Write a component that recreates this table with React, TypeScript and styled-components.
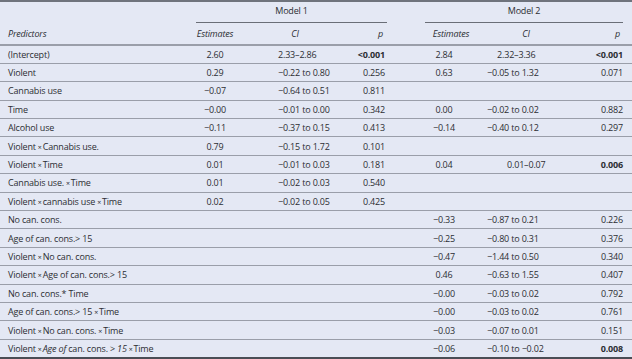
import React from 'react';
import styled, { createGlobalStyle } from 'styled-components';

const GlobalStyle = createGlobalStyle`
    html, body {
        margin: 0;
        padding: 0;
        background: #e4e8f4;
    }
    body {
        font-family: "Open Sans", "Noto Sans", sans-serif;
        color: #2c2e33;
    }
`;

const Table = styled.table`
    width: 632px;
    table-layout: fixed;
    border-collapse: collapse;
    font-size: 9px;
    letter-spacing: -0.18px;
    border-top: 2px solid #6f737c;
    border-bottom: 2px solid #4a4d55;
`;

const ModelHead = styled.th`
    height: 21px;
    padding: 0;
    font-weight: 400;
    vertical-align: bottom;
`;

const ModelLabel = styled.div<{ $left: number; $right: number }>`
    margin: 0 ${p => p.$right}px 0 ${p => p.$left}px;
    padding-bottom: 5px;
    text-align: center;
    border-bottom: 1.5px solid #6a6e77;
`;

const HeadRow = styled.tr`
    height: 22px;
    border-bottom: 2px solid #9a9ea9;
`;

const HeadCell = styled.th<{ $align?: string; $pad?: string }>`
    padding: ${p => p.$pad || '0'};
    font-style: italic;
    font-weight: 400;
    text-align: ${p => p.$align || 'center'};
    vertical-align: middle;
`;

const Row = styled.tr`
    height: 18.4px;
    border-bottom: 1.5px solid #9a9ea9;
    &:last-child {
        border-bottom: none;
    }
`;

const Cell = styled.td<{ $align?: string; $pad?: string; $bold?: boolean }>`
    padding: ${p => p.$pad || '0'};
    text-align: ${p => p.$align || 'center'};
    font-weight: ${p => (p.$bold ? 700 : 400)};
    vertical-align: middle;
    white-space: nowrap;
`;

const Times = styled.span`
    font-size: 7px;
    margin: 0 1px 0 2px;
`;

const Ital = styled.i`
    font-style: italic;
`;

type Vals = [string, string, string, string, string, string];

interface RowData {
    label: React.ReactNode;
    v: Vals;
    bold?: [boolean, boolean];
    indent?: number;
}

const X = () => <Times>×</Times>;

const rows: RowData[] = [
    { label: '(Intercept)', v: ['2.60', '2.33–2.86', '<0.001', '2.84', '2.32–3.36', '<0.001'], bold: [true, true], indent: 10 },
    { label: 'Violent', v: ['0.29', '−0.22 to 0.80', '0.256', '0.63', '−0.05 to 1.32', '0.071'] },
    { label: 'Cannabis use', v: ['−0.07', '−0.64 to 0.51', '0.811', '', '', ''] },
    { label: 'Time', v: ['−0.00', '−0.01 to 0.00', '0.342', '0.00', '−0.02 to 0.02', '0.882'] },
    { label: 'Alcohol use', v: ['−0.11', '−0.37 to 0.15', '0.413', '−0.14', '−0.40 to 0.12', '0.297'] },
    { label: <>Violent<X />Cannabis use.</>, v: ['0.79', '−0.15 to 1.72', '0.101', '', '', ''] },
    { label: <>Violent<X />Time</>, v: ['0.01', '−0.01 to 0.03', '0.181', '0.04', '0.01–0.07', '0.006'], bold: [false, true], indent: 20 },
    { label: <>Cannabis use.<X />Time</>, v: ['0.01', '−0.02 to 0.03', '0.540', '', '', ''] },
    { label: <>Violent<X />cannabis use<X />Time</>, v: ['0.02', '−0.02 to 0.05', '0.425', '', '', ''] },
    { label: 'No can. cons.', v: ['', '', '', '−0.33', '−0.87 to 0.21', '0.226'] },
    { label: 'Age of can. cons.> 15', v: ['', '', '', '−0.25', '−0.80 to 0.31', '0.376'] },
    { label: <>Violent<X />No can. cons.</>, v: ['', '', '', '−0.47', '−1.44 to 0.50', '0.340'] },
    { label: <>Violent<X />Age of can. cons.&gt; 15</>, v: ['', '', '', '0.46', '−0.63 to 1.55', '0.407'] },
    { label: 'No can. cons.* Time', v: ['', '', '', '−0.00', '−0.03 to 0.02', '0.792'] },
    { label: <>Age of can. cons.&gt; 15<X />Time</>, v: ['', '', '', '−0.00', '−0.03 to 0.02', '0.761'] },
    { label: <>Violent<X />No can. cons.<X />Time</>, v: ['', '', '', '−0.03', '−0.07 to 0.01', '0.151'] },
    { label: <>Violent<X /><Ital>Age of</Ital> can. cons. &gt; <Ital>15</Ital><X />Time</>, v: ['', '', '', '−0.06', '−0.10 to −0.02', '0.008'], bold: [false, true] },
];

const App: React.FC = () => {
    return (
        <>
            <GlobalStyle />
            <Table>
                <colgroup>
                    <col style={{ width: 185 }} />
                    <col style={{ width: 60 }} />
                    <col style={{ width: 100 }} />
                    <col style={{ width: 65 }} />
                    <col style={{ width: 68 }} />
                    <col style={{ width: 92 }} />
                    <col style={{ width: 62 }} />
                </colgroup>
                <thead>
                    <tr>
                        <th />
                        <ModelHead colSpan={3}>
                            <ModelLabel $left={11} $right={23}>Model 1</ModelLabel>
                        </ModelHead>
                        <ModelHead colSpan={3}>
                            <ModelLabel $left={15} $right={9}>Model 2</ModelLabel>
                        </ModelHead>
                    </tr>
                    <HeadRow>
                        <HeadCell $align="left" $pad="0 0 0 8px">Predictors</HeadCell>
                        <HeadCell>Estimates</HeadCell>
                        <HeadCell>CI</HeadCell>
                        <HeadCell $pad="0 0 0 6px">p</HeadCell>
                        <HeadCell $pad="0 0 0 14px">Estimates</HeadCell>
                        <HeadCell $pad="0 0 0 4px">CI</HeadCell>
                        <HeadCell $align="right" $pad="0 12px 0 0">p</HeadCell>
                    </HeadRow>
                </thead>
                <tbody>
                    {rows.map((r, i) => (
                        <Row key={i}>
                            <Cell $align="left" $pad="0 0 0 8px">{r.label}</Cell>
                            <Cell>{r.v[0]}</Cell>
                            <Cell $align="left" $pad="0 0 0 33px">{r.v[1]}</Cell>
                            <Cell $align="right" $pad="0 25px 0 0" $bold={r.bold?.[0]}>{r.v[2]}</Cell>
                            <Cell>{r.v[3]}</Cell>
                            <Cell $align="left" $pad={`0 0 0 ${9 + (r.indent || 0)}px`}>{r.v[4]}</Cell>
                            <Cell $align="right" $pad="0 9px 0 0" $bold={r.bold?.[1]}>{r.v[5]}</Cell>
                        </Row>
                    ))}
                </tbody>
            </Table>
        </>
    );
};

export default App;
